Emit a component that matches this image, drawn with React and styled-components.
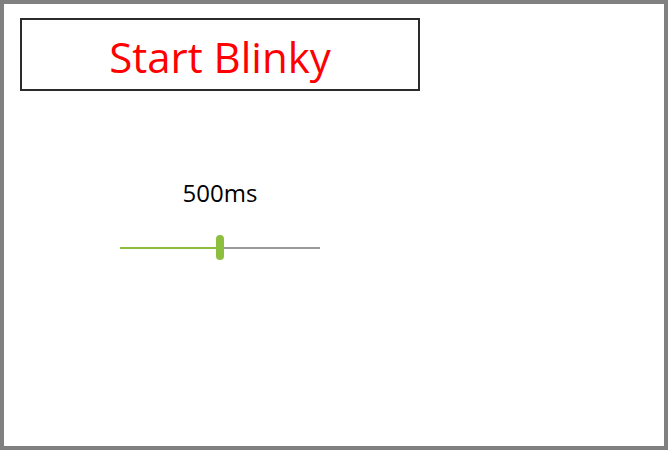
import React, { useState } from "react";
import styled, { createGlobalStyle } from "styled-components";

const GlobalStyle = createGlobalStyle`
  html, body {
    margin: 0;
    padding: 0;
    background: #ffffff;
  }
  * {
    box-sizing: border-box;
  }
`;

const Frame = styled.div`
  width: 668px;
  height: 450px;
  border: 4px solid #808080;
  background: #ffffff;
  padding: 14px 16px;
  font-family: "Open Sans", "Noto Sans", sans-serif;
`;

const Column = styled.div`
  width: 400px;
  display: flex;
  flex-direction: column;
  align-items: center;
`;

const BlinkButton = styled.button`
  width: 400px;
  height: 73px;
  border: 2px solid #2b2b2b;
  background: #ffffff;
  color: #ff0000;
  font-family: inherit;
  font-size: 42px;
  line-height: 1;
  display: flex;
  align-items: center;
  justify-content: center;
  padding: 5px 0 0 0;
  cursor: pointer;
`;

const SliderGroup = styled.div`
  margin-top: 86px;
  display: flex;
  flex-direction: column;
  align-items: center;
`;

const ValueLabel = styled.div`
  font-size: 24px;
  line-height: 32px;
  color: #000000;
`;

const Slider = styled.div`
  margin-top: 26px;
  width: 200px;
  height: 25px;
  display: flex;
  align-items: center;
`;

const Track = styled.div`
  height: 2px;
  flex: ${(p) => p.$grow};
  background: ${(p) => (p.$filled ? "#8cbf3e" : "#999999")};
`;

const Thumb = styled.div`
  width: 8px;
  height: 25px;
  border-radius: 4px;
  background: #8cbf3e;
`;

export default function App() {
  const [delay] = useState(500);
  const ratio = 0.5;

  return (
    <>
      <GlobalStyle />
      <Frame>
        <Column>
          <BlinkButton>Start Blinky</BlinkButton>
          <SliderGroup>
            <ValueLabel>{delay}ms</ValueLabel>
            <Slider>
              <Track $filled $grow={ratio} />
              <Thumb />
              <Track $grow={1 - ratio} />
            </Slider>
          </SliderGroup>
        </Column>
      </Frame>
    </>
  );
}
